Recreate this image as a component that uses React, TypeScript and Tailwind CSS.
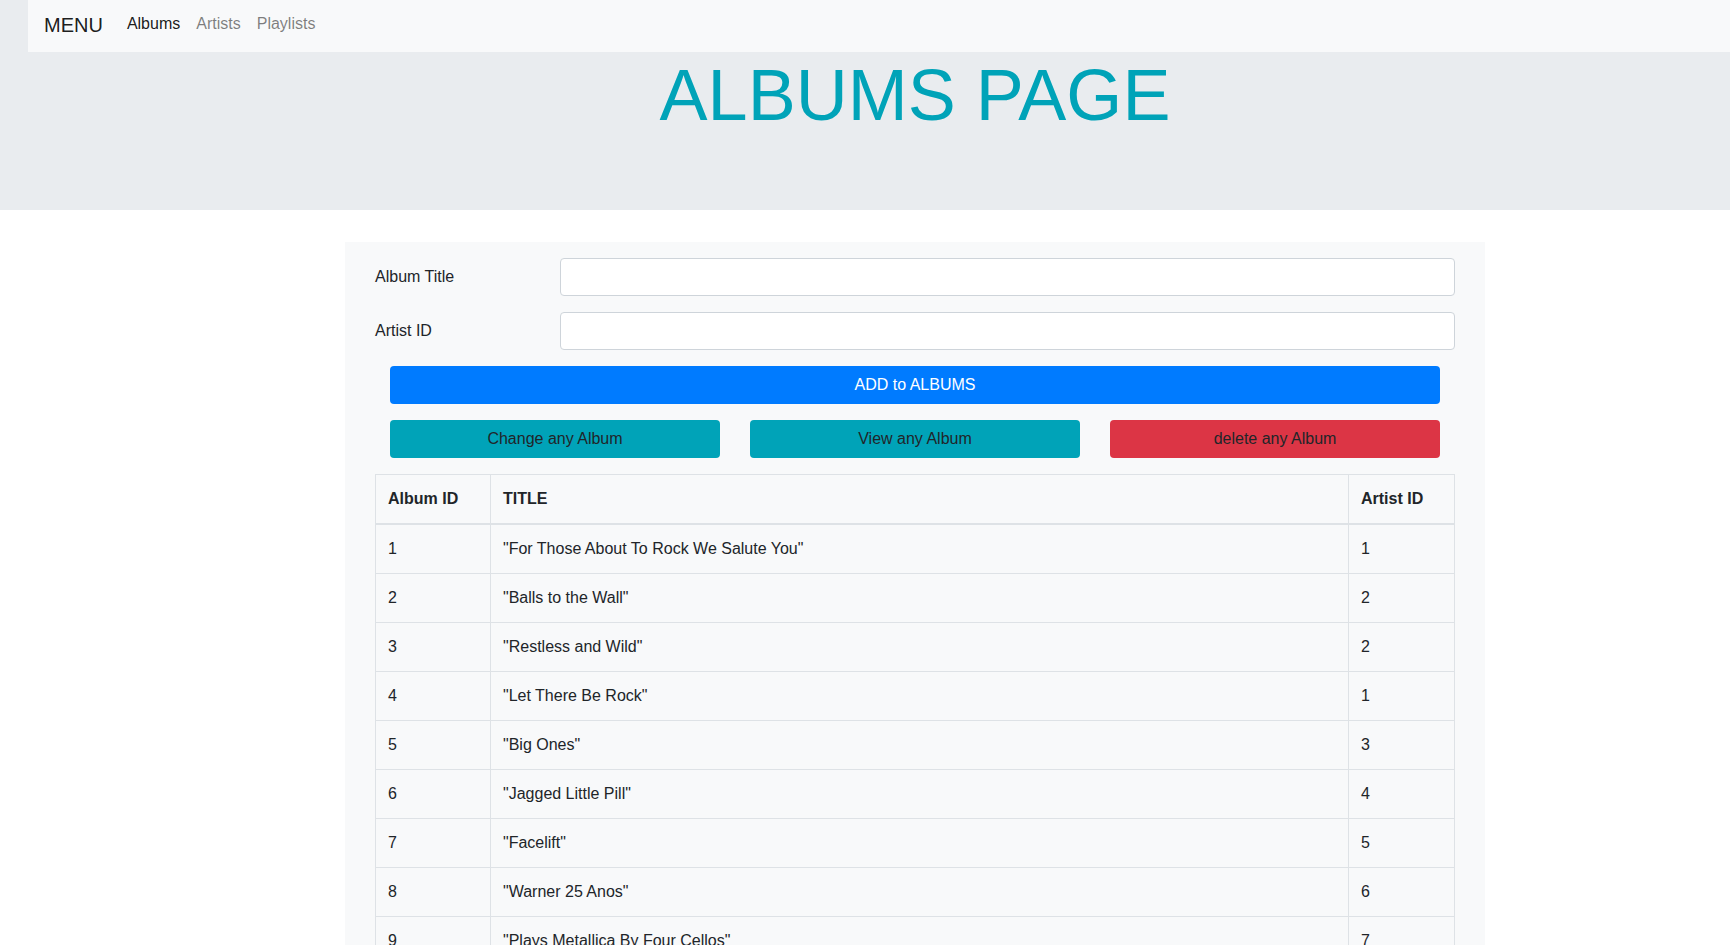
import React from 'react';

const albums: [number, string, number][] = [
  [1, '"For Those About To Rock We Salute You"', 1],
  [2, '"Balls to the Wall"', 2],
  [3, '"Restless and Wild"', 2],
  [4, '"Let There Be Rock"', 1],
  [5, '"Big Ones"', 3],
  [6, '"Jagged Little Pill"', 4],
  [7, '"Facelift"', 5],
  [8, '"Warner 25 Anos"', 6],
  [9, '"Plays Metallica By Four Cellos"', 7],
  [10, '"Audioslave"', 8],
  [11, '"Out Of Exile"', 8],
  [12, '"BackBeat Soundtrack"', 9],
];

export default function App() {
  return (
    <div className="min-h-screen bg-white text-[#212529] font-['Liberation_Sans',Arial,sans-serif] text-base">
      {/* Jumbotron with navbar inside */}
      <div className="bg-[#e9ecef] h-[210px]">
        <nav className="ml-[28px] h-[52px] bg-[#f8f9fa] flex items-center pl-4 pb-[4px]">
          <span className="text-[20px] text-black/90 mr-4 leading-[30px] pt-[2px]">MENU</span>
          <a className="px-2 text-black/90 leading-6">Albums</a>
          <a className="px-2 text-black/50 leading-6">Artists</a>
          <a className="px-2 text-black/50 leading-6">Playlists</a>
        </nav>
        <div className="ml-[345px] w-[1140px] text-center">
          <h1 className="text-[72px] leading-[1.2] text-[#00a3b8] font-light">ALBUMS PAGE</h1>
        </div>
      </div>

      {/* Form + table panel */}
      <div className="ml-[345px] w-[1140px] mt-8 bg-[#f8f9fa] pt-4 px-[30px]">
        <div className="flex items-center mb-4">
          <label className="w-[185px] leading-6">Album Title</label>
          <input className="flex-1 h-[38px] bg-white border border-[#ced4da] rounded px-3" />
        </div>
        <div className="flex items-center mb-4">
          <label className="w-[185px] leading-6">Artist ID</label>
          <input className="flex-1 h-[38px] bg-white border border-[#ced4da] rounded px-3" />
        </div>

        <div className="px-[15px] mb-4">
          <button className="w-full h-[38px] rounded bg-[#007bff] text-white">ADD to ALBUMS</button>
        </div>

        <div className="px-[15px] mb-4 grid grid-cols-3 gap-[30px]">
          <button className="h-[38px] rounded bg-[#00a3b8] text-[#212529]">Change any Album</button>
          <button className="h-[38px] rounded bg-[#00a3b8] text-[#212529]">View any Album</button>
          <button className="h-[38px] rounded bg-[#dc3545] text-[#212529]">delete any Album</button>
        </div>

        <table className="w-full border-collapse text-left">
          <thead>
            <tr>
              <th className="w-[115px] px-3 py-3 leading-6 border border-[#dee2e6] border-b-2 font-bold">Album ID</th>
              <th className="px-3 py-3 leading-6 border border-[#dee2e6] border-b-2 font-bold">TITLE</th>
              <th className="w-[106px] px-3 py-3 leading-6 border border-[#dee2e6] border-b-2 font-bold">Artist ID</th>
            </tr>
          </thead>
          <tbody>
            {albums.map(([id, title, artist]) => (
              <tr key={id}>
                <td className="px-3 py-3 leading-6 border border-[#dee2e6]">{id}</td>
                <td className="px-3 py-3 leading-6 border border-[#dee2e6]">{title}</td>
                <td className="px-3 py-3 leading-6 border border-[#dee2e6]">{artist}</td>
              </tr>
            ))}
          </tbody>
        </table>
      </div>
    </div>
  );
}
